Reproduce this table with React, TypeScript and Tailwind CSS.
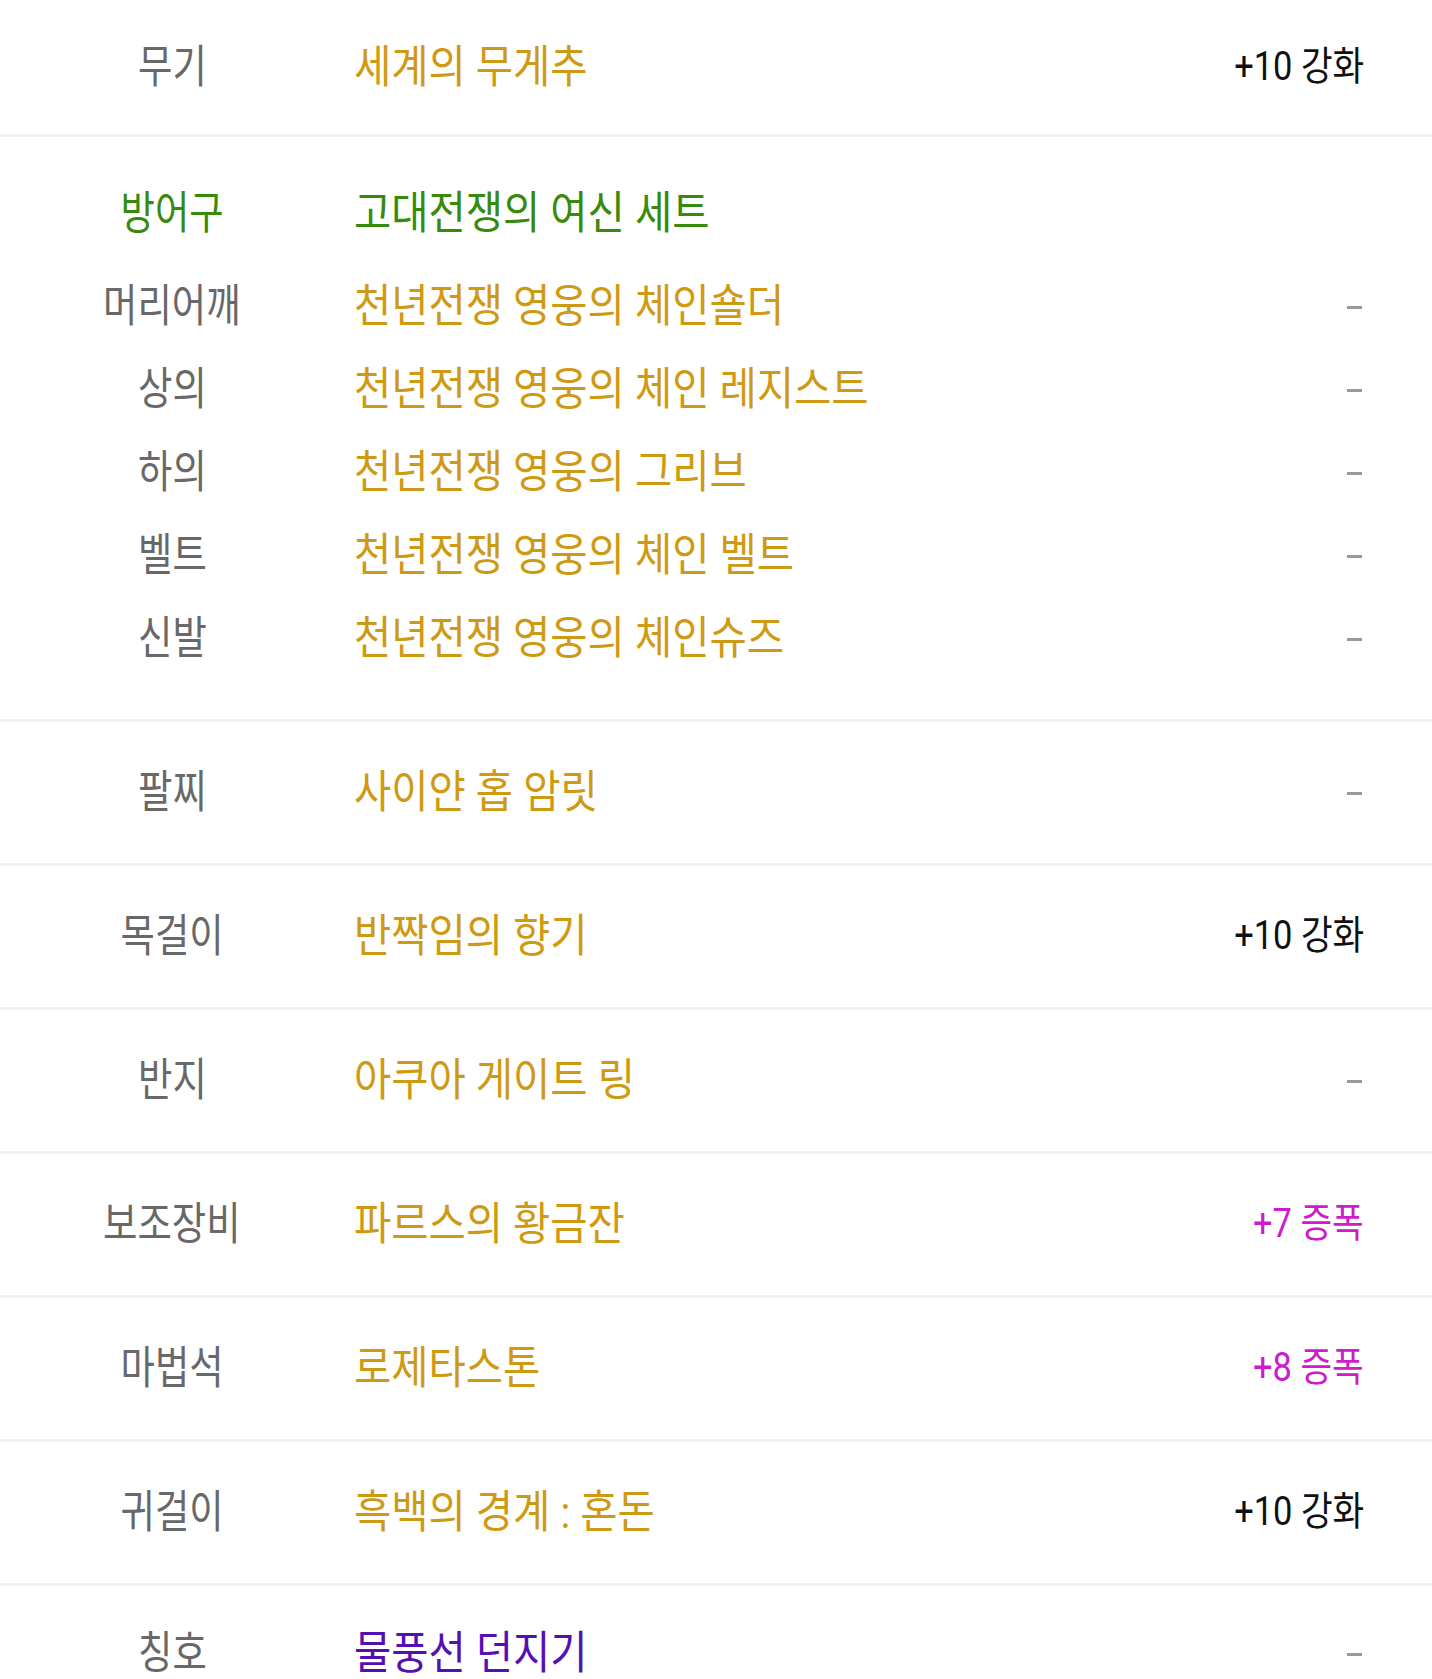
import React from "react";

type Item = {
  label: string;
  name: string;
  value?: string;
  nameColor?: string;
  valueKind?: "reinforce" | "amplify" | "none";
};

function NameText({ name, color }: { name: string; color: string }) {
  return (
    <span className={`inline-block origin-left scale-x-[0.9] whitespace-nowrap text-[45px] leading-none ${color}`}>
      {name}
    </span>
  );
}

function LabelText({ label, color = "text-[#686868]" }: { label: string; color?: string }) {
  return (
    <span className={`inline-block origin-center scale-x-[0.83] whitespace-nowrap text-[45px] leading-none ${color}`}>
      {label}
    </span>
  );
}

function ValueText({ item }: { item: Item }) {
  if (item.valueKind === "reinforce") {
    return (
      <span className="inline-block origin-right scale-x-[0.86] whitespace-nowrap text-[40px] leading-none text-[#111111]">
        {item.value}
      </span>
    );
  }
  if (item.valueKind === "amplify") {
    return (
      <span className="inline-block origin-right scale-x-[0.86] whitespace-nowrap text-[40px] leading-none text-[#cc1ccc]">
        {item.value}
      </span>
    );
  }
  return <span className="mr-[2px] inline-block h-[3px] w-[15px] translate-y-[1px] bg-[#9a9a9a]" aria-label="–"></span>;
}

function Row({ item, height }: { item: Item; height: string }) {
  return (
    <div className={`flex items-center ${height}`}>
      <div className="flex w-[344px] shrink-0 justify-center">
        <LabelText label={item.label} />
      </div>
      <div className="min-w-0 flex-1 pl-[10px]">
        <NameText name={item.name} color={item.nameColor ?? "text-[#cf9a13]"} />
      </div>
      <div className="flex shrink-0 justify-end pr-[68px]">
        <ValueText item={item} />
      </div>
    </div>
  );
}

const armor: Item[] = [
  { label: "머리어깨", name: "천년전쟁 영웅의 체인숄더", valueKind: "none" },
  { label: "상의", name: "천년전쟁 영웅의 체인 레지스트", valueKind: "none" },
  { label: "하의", name: "천년전쟁 영웅의 그리브", valueKind: "none" },
  { label: "벨트", name: "천년전쟁 영웅의 체인 벨트", valueKind: "none" },
  { label: "신발", name: "천년전쟁 영웅의 체인슈즈", valueKind: "none" },
];

const singles: Item[] = [
  { label: "팔찌", name: "사이얀 홉 암릿", valueKind: "none" },
  { label: "목걸이", name: "반짝임의 향기", value: "+10 강화", valueKind: "reinforce" },
  { label: "반지", name: "아쿠아 게이트 링", valueKind: "none" },
  { label: "보조장비", name: "파르스의 황금잔", value: "+7 증폭", valueKind: "amplify" },
  { label: "마법석", name: "로제타스톤", value: "+8 증폭", valueKind: "amplify" },
  { label: "귀걸이", name: "흑백의 경계 : 혼돈", value: "+10 강화", valueKind: "reinforce" },
];

export default function App() {
  return (
    <div className="w-full bg-white font-['Roboto','Noto_Sans_CJK_KR',sans-serif] antialiased">
      {/* Weapon */}
      <div className="border-b-[3px] border-[#f1f1f1]">
        <Row
          item={{ label: "무기", name: "세계의 무게추", value: "+10 강화", valueKind: "reinforce" }}
          height="h-[134px]"
        />
      </div>

      {/* Armor set */}
      <div className="border-b-[3px] border-[#f1f1f1] pt-[34px] pb-[39px]">
        <div className="flex h-[84px] items-center">
          <div className="flex w-[344px] shrink-0 justify-center">
            <LabelText label="방어구" color="text-[#388a0c]" />
          </div>
          <div className="min-w-0 flex-1 pl-[10px]">
            <NameText name="고대전쟁의 여신 세트" color="text-[#388a0c]" />
          </div>
        </div>
        <div className="mt-[10px] flex flex-col">
          {armor.map((it) => (
            <Row key={it.label} item={it} height="h-[83px]" />
          ))}
        </div>
      </div>

      {singles.map((it) => (
        <div key={it.label} className="border-b-[3px] border-[#f1f1f1] pb-[1px]">
          <Row item={it} height="h-[140px]" />
        </div>
      ))}

      {/* Title (cut off at bottom) */}
      <div className="h-[93px] overflow-hidden">
        <Row
          item={{ label: "칭호", name: "물풍선 던지기", nameColor: "text-[#5410b2]", valueKind: "none" }}
          height="h-[135px]"
        />
      </div>
    </div>
  );
}
